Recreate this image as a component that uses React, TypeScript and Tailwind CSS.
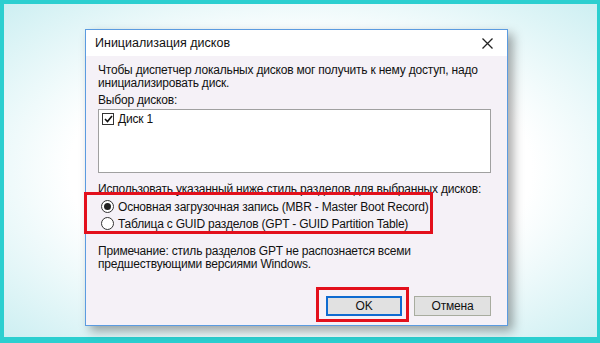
import React from "react";

const font = { fontFamily: '"Liberation Sans", Arial, sans-serif' };

const Radio = ({ checked, label }: { checked?: boolean; label: string }) => (
    <div className="flex items-center gap-[4px] h-[17px]">
        <span className="w-[13px] h-[13px] rounded-full border border-[#333] bg-white flex items-center justify-center">
            {checked && <span className="w-[7px] h-[7px] rounded-full bg-[#222]" />}
        </span>
        <span>{label}</span>
    </div>
);

export default function App() {
    return (
        <div className="w-[600px] h-[343px] bg-[#2ccfd0] pt-[4px] pl-[4px] pr-[3px] pb-[6px]" style={font}>
            <div className="w-full h-full bg-[radial-gradient(ellipse_at_center,#ffffff_55%,#cdeff2_100%)] pl-[81px] pt-[25px]">
                <div className="relative w-[423px] h-[297px] border border-[#5b9be0] bg-[#f5f1f7] shadow-[5px_5px_10px_rgba(0,0,0,0.35)] flex flex-col text-[12px] leading-[12px] tracking-[-0.2px] text-[#111] whitespace-nowrap">
                    {/* Title bar */}
                    <div className="h-[26px] bg-white flex items-center justify-between pl-[9px] pr-[14px] shrink-0">
                        <span className="text-[12.5px] tracking-normal">Инициализация дисков</span>
                        <svg width="11" height="11" viewBox="0 0 11 11" className="text-[#222]">
                            <path d="M0.5 0.5 L10.5 10.5 M10.5 0.5 L0.5 10.5" stroke="currentColor" strokeWidth="1.3" />
                        </svg>
                    </div>

                    {/* Content */}
                    <div className="flex flex-col pl-[12px] pr-[16px] pt-[8px] flex-1">
                        <p className="leading-[13px]">Чтобы диспетчер локальных дисков мог получить к нему доступ, надо<br />инициализировать диск.</p>
                        <p className="mt-[4px]">Выбор дисков:</p>
                        <div className="mt-[3px] h-[64px] border border-[#a0a0a0] bg-white pt-[3px] pl-[3px]">
                            <div className="flex items-center gap-[4px]">
                                <span className="w-[12px] h-[12px] border border-[#333] bg-white flex items-center justify-center">
                                    <svg width="9" height="8" viewBox="0 0 9 8">
                                        <path d="M1 4 L3.5 6.5 L8 1" stroke="#111" strokeWidth="1.6" fill="none" />
                                    </svg>
                                </span>
                                <span>Диск 1</span>
                            </div>
                        </div>
                        <p className="mt-[10px]">Использовать указанный ниже стиль разделов для выбранных дисков:</p>
                        <div className="relative mt-[3px] pl-[3px] flex flex-col">
                            <Radio checked label="Основная загрузочная запись (MBR - Master Boot Record)" />
                            <Radio label="Таблица с GUID разделов (GPT - GUID Partition Table)" />
                            <div className="absolute left-[-14px] top-[-6px] w-[349px] h-[42px] border-[3px] border-[#e3101c]" />
                        </div>
                        <p className="mt-[13px] leading-[13px]">Примечание: стиль разделов GPT не распознается всеми<br />предшествующими версиями Windows.</p>

                        <div className="mt-auto mb-[9px] flex justify-end gap-[12px]">
                            <div className="relative">
                                <button className="w-[76px] h-[20px] bg-[#e1e1e1] border-2 border-[#0f6bd0] text-[12px] leading-[12px]">OK</button>
                                <div className="absolute left-[-10px] top-[-9px] w-[93px] h-[35px] border-[3px] border-[#e3101c]" />
                            </div>
                            <button className="w-[77px] h-[20px] bg-[#e1e1e1] border border-[#a8ac9f] text-[12px] leading-[12px]">Отмена</button>
                        </div>
                    </div>
                </div>
            </div>
        </div>
    );
}
